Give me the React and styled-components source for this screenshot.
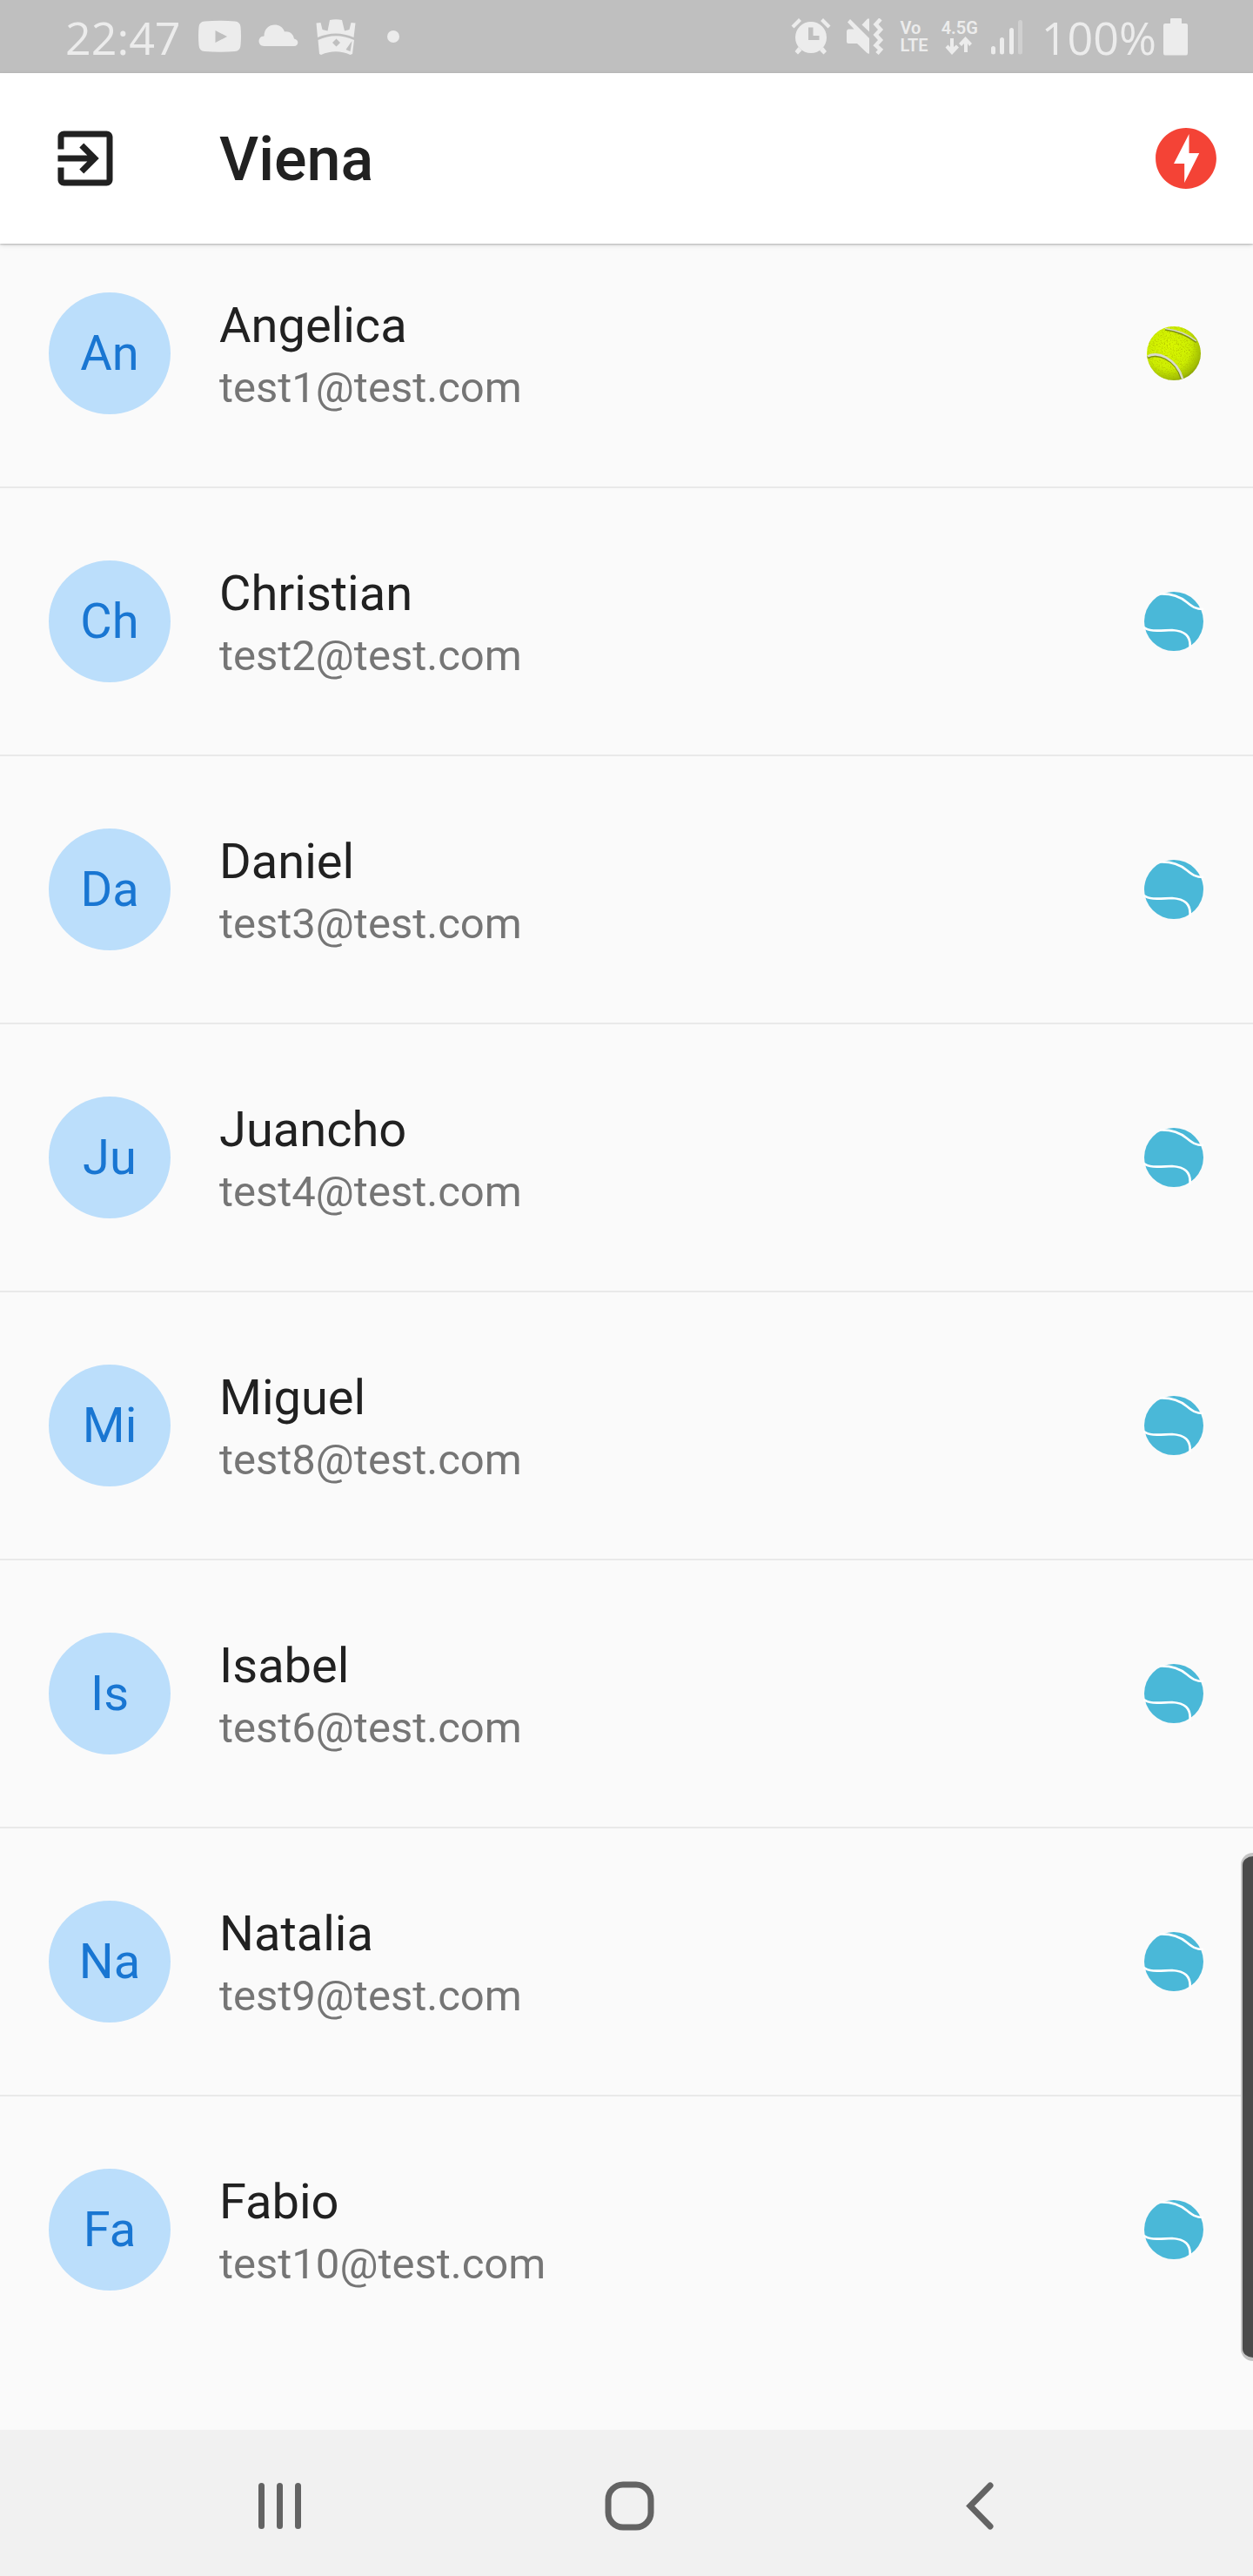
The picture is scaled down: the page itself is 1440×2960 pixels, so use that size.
import React from 'react';
import styled, { createGlobalStyle } from 'styled-components';

const GlobalStyle = createGlobalStyle`
  *, *::before, *::after { box-sizing: border-box; }
  body { margin: 0; background: #fafafa; font-family: Roboto, sans-serif; color: #212121; }
`;

const Screen = styled.div`
  display: flex;
  flex-direction: column;
  min-height: 100vh;
`;

const StatusBar = styled.div`
  display: flex;
  align-items: center;
  justify-content: space-between;
  height: 84px;
  padding: 0 75px;
  background: #bfbfbf;
  color: #ececec;
`;

const StatusGroup = styled.div`
  display: flex;
  align-items: center;
  gap: ${(p) => p.$gap}px;
`;

const StatusText = styled.span`
  padding-top: 2px;
  font: 400 52px/82px "Open Sans", "Noto Sans", sans-serif;
`;

const StatusIcon = styled.svg`
  display: block;
  flex: none;
  fill: currentColor;
`;

const NetworkLabel = styled.span`
  display: flex;
  flex-direction: column;
  align-items: flex-start;
  font-size: 20px;
  font-weight: 600;
  line-height: 20px;
`;

const AppBar = styled.header`
  position: relative;
  display: flex;
  align-items: center;
  height: 196px;
  padding: 0 35px 0 56px;
  background: #fff;
  box-shadow: 0 1px 2px rgba(0, 0, 0, 0.24), 0 2px 6px rgba(0, 0, 0, 0.1);
`;

const IconButton = styled.button`
  display: flex;
  padding: 0;
  border: 0;
  background: none;
  color: ${(p) => p.$color};
  cursor: pointer;

  svg { display: block; fill: currentColor; }
`;

const Title = styled.h1`
  flex: 1;
  margin: 0 0 0 112px;
  padding-top: 2px;
  font-size: 70px;
  font-weight: 500;
  line-height: 82px;
`;

const Content = styled.main`
  flex: 1;
`;

const PlayerList = styled.ul`
  margin: 0;
  padding: 0;
  list-style: none;
`;

const PlayerRow = styled.li`
  display: flex;
  align-items: center;
  gap: 56px;
  height: 252px;
  padding: 0 56px;
`;

const Divider = styled.li`
  display: flex;
  align-items: center;
  height: 56px;

  &::before { content: ""; flex: 1; height: 2px; background: #e9e9e9; }
`;

const Avatar = styled.span`
  display: flex;
  align-items: center;
  justify-content: center;
  width: 140px;
  height: 140px;
  border-radius: 50%;
  background: #bbdefb;
  color: #1976d2;
  font-size: 56px;
  line-height: 66px;
`;

const PlayerText = styled.div`
  display: flex;
  flex: 1;
  flex-direction: column;
  gap: 9px;
  padding-top: 4px;
`;

const Name = styled.span`
  font-size: 56px;
  line-height: 66px;
`;

const Email = styled.span`
  color: #757575;
  font-size: 49px;
  line-height: 60px;
`;

const BallIcon = styled.svg`
  display: block;
  flex: none;
`;

const EdgeHandle = styled.div`
  position: absolute;
  top: 2129px;
  right: 0;
  width: 14px;
  height: 584px;
  border: solid #c4c4c4;
  border-width: 4px 0 4px 2px;
  border-radius: 14px 0 0 14px;
  background: #4a4a4a;
`;

const NavBar = styled.nav`
  display: flex;
  align-items: center;
  justify-content: center;
  gap: 318px;
  height: 168px;
  padding-top: 8px;
  background: #f1f1f1;
`;

const players = [
  { name: 'Angelica', email: 'test1@test.com', available: true },
  { name: 'Christian', email: 'test2@test.com' },
  { name: 'Daniel', email: 'test3@test.com' },
  { name: 'Juancho', email: 'test4@test.com' },
  { name: 'Miguel', email: 'test8@test.com' },
  { name: 'Isabel', email: 'test6@test.com' },
  { name: 'Natalia', email: 'test9@test.com' },
  { name: 'Fabio', email: 'test10@test.com' },
];

function TennisBall() {
  return (
    <BallIcon width="70" height="70" viewBox="0 0 70 70" role="img" aria-label="Available">
      <defs>
        <radialGradient id="felt" cx="0.4" cy="0.38" r="0.68">
          <stop offset="0" stopColor="#daf800" />
          <stop offset="0.6" stopColor="#cdee02" />
          <stop offset="0.88" stopColor="#a3c004" />
          <stop offset="1" stopColor="#7c9406" />
        </radialGradient>
        <filter id="fuzz" x="0" y="0" width="1" height="1">
          <feTurbulence type="fractalNoise" baseFrequency="0.7" numOctaves="2" seed="4" />
          <feColorMatrix values="0 0 0 0 0.4  0 0 0 0 0.47  0 0 0 0 0  4 0 0 0 -2" />
          <feComposite in2="SourceGraphic" operator="in" />
        </filter>
      </defs>
      <circle cx="35" cy="35" r="31" fill="url(#felt)" />
      <circle cx="35" cy="35" r="31" filter="url(#fuzz)" opacity="0.6" />
      <g fill="none">
        <path d="M25 7.500C37 9 50 14 61 22" stroke="#7d900e" strokeWidth="2.6" />
        <path d="M25 6.500C37 8 51 13 61 21" stroke="#d5d8c4" strokeWidth="1.4" />
        <path d="M5 40C14 34 37 40 44 64" stroke="#7d900e" strokeWidth="3" />
        <path d="M5 38.500C15 32 38 40 45 64" stroke="#d9dacd" strokeWidth="2.6" />
      </g>
    </BallIcon>
  );
}

function BlueBall() {
  return (
    <BallIcon width="70" height="70" viewBox="0 0 70 70" role="img" aria-label="Unavailable">
      <circle cx="35" cy="35" r="34" fill="#4ab8d8" />
      <g fill="none" stroke="#fff" strokeWidth="2.7">
        <path d="M19 3.500C32 3 42 6.500 50 13C56 18 60 21 69 21" />
        <path d="M0 41.500C7 48 23 45 33 45C47 46 55 51 53.500 66" />
      </g>
    </BallIcon>
  );
}

export default function App() {
  return (
    <Screen>
      <GlobalStyle />
      <StatusBar>
        <StatusGroup $gap={20}>
          <StatusText>22:47</StatusText>
          <StatusIcon width="49" height="42" viewBox="0 0 49 42" aria-hidden="true">
            <path fillRule="evenodd" d="M7 3.500Q24.500 2 42 3.500Q48 4 48.500 10Q49.500 20 48.500 31Q48 37.500 42 38Q24.500 39.500 7 38Q1 37.500 .5 31Q-.5 20 .5 10Q1 4 7 3.500ZM19.500 14V28L33 21Z" />
          </StatusIcon>
          <StatusIcon width="46" height="42" viewBox="0 0 46 42" aria-hidden="true">
            <path d="M6.500 32C-1.500 32-1.500 20.500 6.500 20.500C6.500 5 26 3.500 30 15.500C35.500 14.500 40 18 41 23.500C47.500 25 46 32 41 32Z" />
          </StatusIcon>
          <StatusIcon width="46" height="42" viewBox="0 0 46 42" aria-hidden="true">
            <path d="M.5 5.500L5.500 5L7.500 13L13.500 14.500L16 2Q23 .5 30 2L33 14.500L38.500 13L40.500 5L45.500 5.500L43.500 22Q23 13 2 22Z" />
            <path fillRule="evenodd" d="M2.500 25Q23 15.500 44 25L42 41L39.500 42Q23 34.500 6 42L4 41ZM23.500 23.500L19 28L23.500 32.500L28 28ZM41.500 26L34.500 36L39.500 38Z" />
          </StatusIcon>
          <StatusIcon width="46" height="42" viewBox="0 0 46 42" aria-hidden="true">
            <circle cx="23" cy="21" r="7" />
          </StatusIcon>
        </StatusGroup>
        <StatusGroup $gap={8}>
          <StatusGroup $gap={15}>
            <StatusIcon width="48" height="42" viewBox="0 0 48 42" aria-hidden="true">
              <path fillRule="evenodd" d="M23 4A18 18 0 1 0 23 40A18 18 0 1 0 23 4ZM20 10.500H25.500V20H32.500V25H20Z" />
              <path d="M9 0L12 3L3.500 11.500L.5 8.500ZM37 0L34 3L42.500 11.500L45.500 8.500ZM8.500 33L12.500 37L8 41.500L4.500 38ZM37 33L33 37L37.500 41.500L41 38Z" />
            </StatusIcon>
            <StatusIcon width="48" height="42" viewBox="0 0 48 42" aria-hidden="true">
              <path d="M5 1L27 23V40.500Q25.500 41 24 39.500L13 29H3Q1 29 1 27V15Q1 13 3 12.500H9.500L2 4.500ZM18.500 7.500L25 .5H27V15.500Z" />
              <path d="M40 1L34.500 7L40 13L34.500 19L40 25L34.500 31L40 36L36 40.500" fill="none" stroke="currentColor" strokeWidth="4.500" />
            </StatusIcon>
            <NetworkLabel>
              <span>Vo</span>
              <span>LTE</span>
            </NetworkLabel>
            <NetworkLabel>
              <span>4.5G</span>
              <StatusIcon width="42" height="21" viewBox="0 0 42 21" aria-hidden="true">
                <path d="M10 2H14V12L17 9.500L20 12.500L12 21L4.500 12.500L7.500 9.500L10 12ZM26 18V8L23 11L20 8L27.500 0L35 8L32 11L30 8V18Z" />
              </StatusIcon>
            </NetworkLabel>
            <StatusIcon width="50" height="42" viewBox="0 0 50 42" aria-hidden="true">
              <rect x="0" y="32" width="5" height="9.500" rx="2.500" />
              <rect x="10" y="22" width="5" height="19.500" rx="2.500" />
              <rect x="21" y="11" width="5" height="30.500" rx="2.500" />
              <rect x="31" y="2" width="5" height="39.500" rx="2.500" opacity="0.400" />
            </StatusIcon>
          </StatusGroup>
          <StatusText>100%</StatusText>
          <StatusIcon width="28" height="44" viewBox="0 0 28 44" aria-hidden="true">
            <path d="M9 1H20Q21 1 21 2V7H26Q28 7 28 9V41Q28 43.500 26 43.500H2Q0 43.500 0 41V9Q0 7 2 7H8V2Q8 1 9 1Z" />
          </StatusIcon>
        </StatusGroup>
      </StatusBar>

      <AppBar>
        <IconButton type="button" aria-label="Sign out" $color="#212121">
          <svg width="84" height="84" viewBox="0 0 24 24" aria-hidden="true">
            <path d="M10.090 15.590L11.500 17l5-5-5-5-1.410 1.410L12.670 11H3v2h9.670l-2.580 2.590zM19 3H5c-1.110 0-2 .9-2 2v4h2V5h14v14H5v-4H3v4c0 1.100.89 2 2 2h14c1.100 0 2-.9 2-2V5c0-1.100-.9-2-2-2z" />
          </svg>
        </IconButton>
        <Title>Viena</Title>
        <IconButton type="button" aria-label="Quick match" $color="#f44336">
          <svg width="84" height="84" viewBox="0 0 24 24" aria-hidden="true">
            <path d="M12 2.020c-5.510 0-9.980 4.470-9.980 9.980s4.470 9.980 9.980 9.980 9.980-4.470 9.980-9.980S17.510 2.020 12 2.020zM11.480 20v-6.260H8L13 4v6.260h3.350L11.480 20z" />
          </svg>
        </IconButton>
      </AppBar>

      <Content>
        <PlayerList>
          {players.map((player, index) => (
            <React.Fragment key={player.email}>
              {index > 0 && <Divider role="separator" />}
              <PlayerRow>
                <Avatar>{player.name.slice(0, 2)}</Avatar>
                <PlayerText>
                  <Name>{player.name}</Name>
                  <Email>{player.email}</Email>
                </PlayerText>
                {player.available ? <TennisBall /> : <BlueBall />}
              </PlayerRow>
            </React.Fragment>
          ))}
        </PlayerList>
      </Content>

      <EdgeHandle />

      <NavBar aria-label="System">
        <IconButton type="button" aria-label="Recent apps" $color="#636363">
          <svg width="84" height="84" viewBox="0 0 84 84" aria-hidden="true">
            <rect x="21" y="15" width="7" height="53" rx="3.500" />
            <rect x="42" y="15" width="7" height="53" rx="3.500" />
            <rect x="63" y="15" width="7" height="53" rx="3.500" />
          </svg>
        </IconButton>
        <IconButton type="button" aria-label="Home" $color="#636363">
          <svg width="84" height="84" viewBox="0 0 84 84" aria-hidden="true">
            <rect x="21" y="17" width="49" height="49" rx="17" fill="none" stroke="currentColor" strokeWidth="7" />
          </svg>
        </IconButton>
        <IconButton type="button" aria-label="Back" $color="#636363">
          <svg width="84" height="84" viewBox="0 0 84 84" aria-hidden="true">
            <path d="M58 18L35 41.500L58 65" fill="none" stroke="currentColor" strokeWidth="7" strokeLinecap="round" />
          </svg>
        </IconButton>
      </NavBar>
    </Screen>
  );
}
